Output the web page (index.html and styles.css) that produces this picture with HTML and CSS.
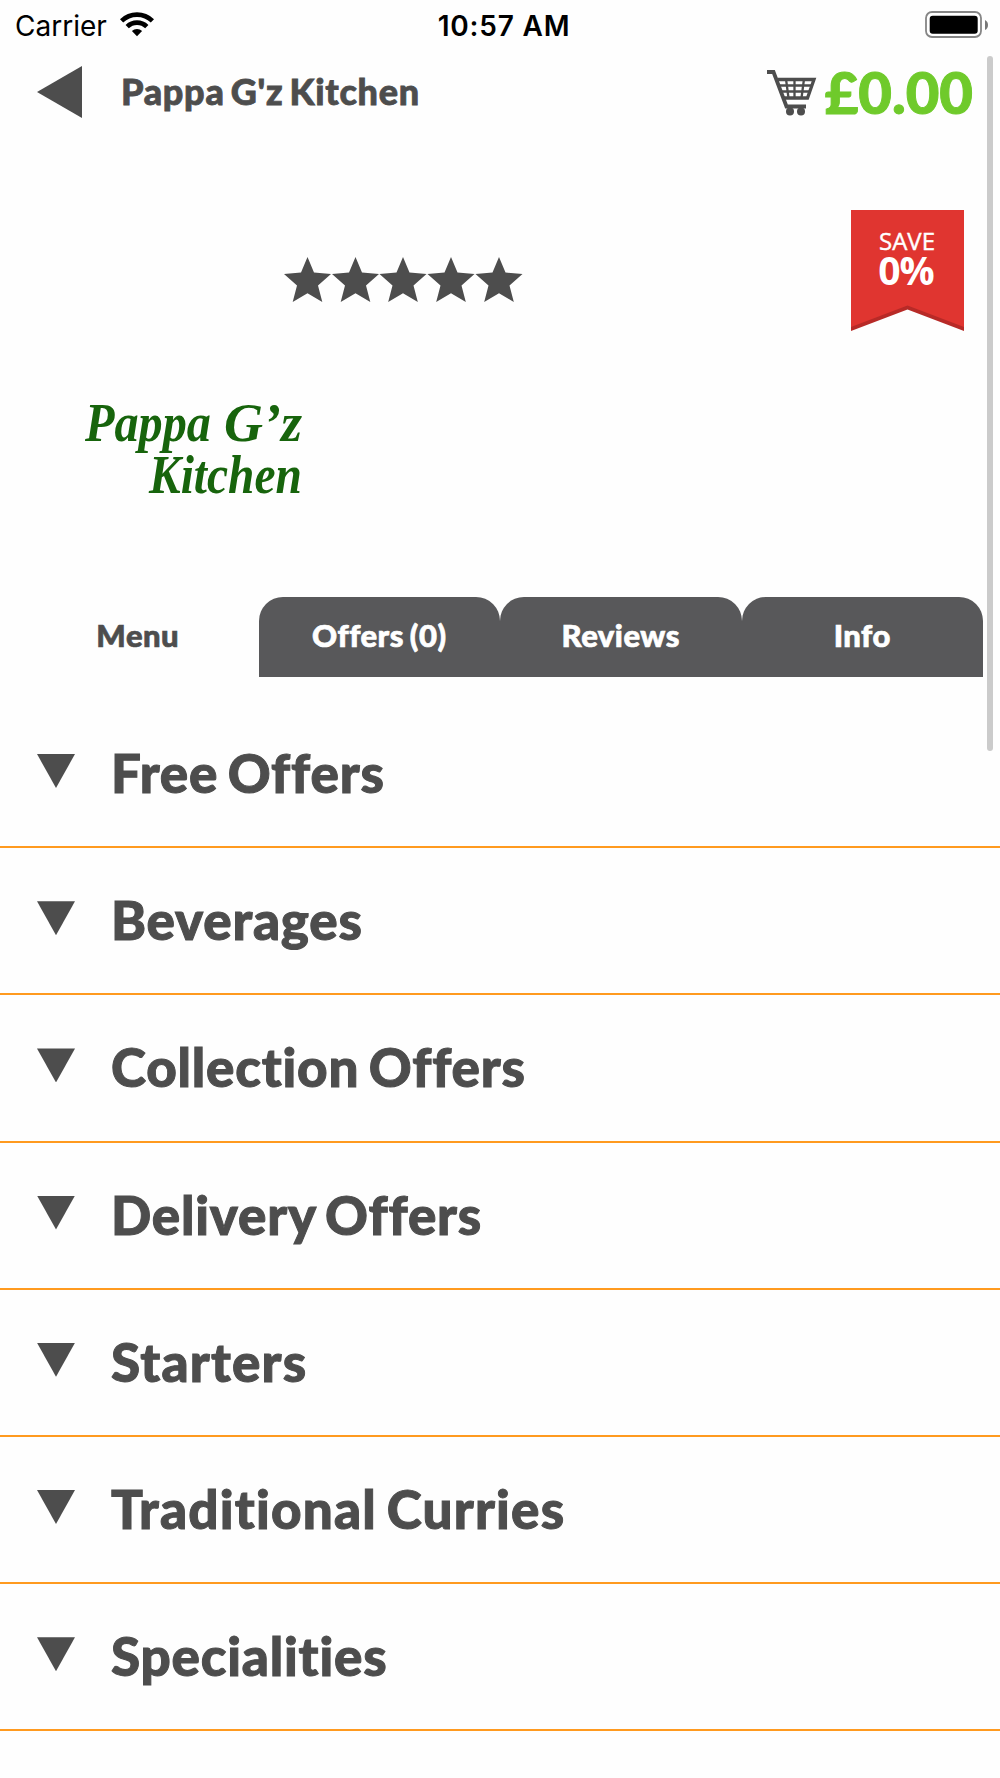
FILE: index.html
```html
<!DOCTYPE html>
<html lang="en">
<head>
<meta charset="utf-8">
<title>Pappa G'z Kitchen</title>
<link rel="stylesheet" href="styles.css">
</head>
<body>
<div class="screen">
  <div class="status">
    <div class="carrier"><span>Carrier</span>
      <svg width="34" height="25" viewBox="0 0 34 25"><g fill="none" stroke="#000" stroke-width="4.6"><path d="M1.6 8.9A22 22 0 0 1 32.4 8.9"/><path d="M7.2 14.6A14 14 0 0 1 26.8 14.6"/></g><path d="M17 24.2L11.9 19.1A7.2 7.2 0 0 1 22.1 19.1Z"/></svg>
    </div>
    <div class="time">10:57 AM</div>
    <svg class="battery" width="64" height="28" viewBox="0 0 64 28"><rect x="1" y="1" width="55" height="25" rx="6" fill="#fff" stroke="#858585" stroke-width="1.8"/><rect x="4.7" y="4.8" width="48" height="18" rx="3" /><path d="M60 9Q63 10.500 63 14T60 19Z" fill="#777"/></svg>
  </div>
  <header class="header">
    <svg width="45" height="52" viewBox="0 0 45 52"><path d="M0 26L45 0V52Z" fill="#4d4d4d"/></svg>
    <h1 class="title">Pappa G'z Kitchen</h1>
    <svg class="cart" width="50" height="46" viewBox="0 0 50 46"><g fill="none" stroke="#4d4d4d"><path d="M0 2H6.500L19.500 36.500H39" stroke-width="3.800"/><path d="M10.500 9.500H47L40.500 28H17" stroke-width="3.300"/><path d="M12 15.500H45M14 21.500H43M19 9L21.500 28M27.500 9V28M37 9L34.500 28" stroke-width="2.300"/></g><circle cx="23" cy="41.500" r="4" fill="#4d4d4d"/><circle cx="34" cy="41.500" r="4" fill="#4d4d4d"/></svg>
    <div class="price">£0.00</div>
  </header>
  <section class="hero">
    <svg class="stars" width="240" height="46" viewBox="0 0 240 46"><defs><path id="star" d="M23.500 0L30 15.500L47 17L34 28.500L38.300 45L23.500 36.300L8.700 45L13 28.500L0 17L17 15.500Z"/></defs><g fill="#4d4d4d"><use href="#star"/><use href="#star" x="48"/><use href="#star" x="95.500"/><use href="#star" x="143.500"/><use href="#star" x="191.500"/></g></svg>
    <div class="ribbon">
      <svg class="flag" width="113" height="121" viewBox="0 0 113 121"><path d="M0 0H113V121L56.500 99.500L0 121Z" fill="#b72a27"/><path d="M0 0H113V117L56.500 95.500L0 117Z" fill="#e03530"/></svg>
      <div class="save">SAVE</div>
      <div class="percent">0%</div>
    </div>
  </section>
  <svg class="logo" width="240" height="130" viewBox="0 -10 240 130"><g class="script"><text x="3" y="46" textLength="126" lengthAdjust="spacingAndGlyphs">Pappa</text><text x="142" y="46" textLength="78" lengthAdjust="spacingAndGlyphs">G’z</text><text x="67" y="98" textLength="153" lengthAdjust="spacingAndGlyphs">Kitchen</text></g></svg>
  <nav class="tabs">
    <div class="tab active">Menu</div><div class="tab">Offers (0)</div><div class="tab">Reviews</div><div class="tab">Info</div>
  </nav>
  <ul class="menu">
    <li class="row"><i class="arrow"></i><span>Free Offers</span></li>
    <li class="row"><i class="arrow"></i><span>Beverages</span></li>
    <li class="row"><i class="arrow"></i><span>Collection Offers</span></li>
    <li class="row"><i class="arrow"></i><span>Delivery Offers</span></li>
    <li class="row loose"><i class="arrow"></i><span>Starters</span></li>
    <li class="row loose"><i class="arrow"></i><span>Traditional Curries</span></li>
    <li class="row"><i class="arrow"></i><span>Specialities</span></li>
  </ul>
  <div class="scrollbar"></div>
</div>
</body>
</html>
```
FILE: styles.css
```css
* { box-sizing: border-box; }
body { margin: 0; background: #fefefe; color: #4d4d4d; font-family: Lato, sans-serif; font-variant-ligatures: none; }
svg { display: block; flex: none; }
.screen { position: relative; width: 1000px; height: 1778px; overflow: hidden; }
.status { height: 50px; display: grid; grid-template-columns: 400px 1fr 400px; color: #000; font-family: Inter, sans-serif; font-size: 28px; line-height: 52px; }
.carrier { display: flex; gap: 13px; padding-left: 15px; }
.carrier svg { margin-top: 12px; }
.time { text-align: center; font-weight: 600; letter-spacing: 0.8px; padding-left: 8px; white-space: nowrap; }
.battery { justify-self: end; margin: 11px 11px 0 0; }
.header { height: 84px; display: flex; align-items: center; padding: 0 27px 0 37px; }
.title { flex: 1; margin: -3px 0 0 39px; font-size: 36px; font-weight: 900; line-height: 50px; letter-spacing: 0.7px; word-spacing: -3px; -webkit-text-stroke: 0.8px; }
.cart { margin-right: 8px; margin-top: 2px; }
.price { font-size: 58px; font-weight: 900; line-height: 70px; color: #6fca2b; -webkit-text-stroke: 1px; }
.hero { height: 248px; display: flex; justify-content: space-between; padding: 76px 36px 0 284px; }
.stars { margin-top: 47px; }
.ribbon { display: grid; width: 113px; height: 121px; color: #fff; font-family: "Open Sans", sans-serif; text-align: center; grid-template-rows: 46px 32px 1fr; }
.flag { grid-area: 1 / 1 / 4 / 2; }
.save { grid-area: 1 / 1; font-size: 24px; font-weight: 500; line-height: 30px; padding: 16px 1px 0 0; -webkit-text-stroke: 0.4px; }
.percent { grid-area: 2 / 1; font-size: 39px; font-weight: 700; line-height: 28px; letter-spacing: -1px; padding-right: 3px; }
.logo { margin: 3px 0 0 82px; }
.script { font: italic 700 54px "Liberation Serif", serif; fill: #17640c; }
.tabs { display: flex; height: 80px; margin: 82px 17px 0; }
.tab { flex: 1; border-radius: 24px 24px 0 0; background: #58585a; color: #fff; font-size: 31px; font-weight: 900; line-height: 77px; text-align: center; letter-spacing: 0.5px; word-spacing: -2px; -webkit-text-stroke: 0.7px; }
.active { background: none; color: #4d4d4d; }
.menu { list-style: none; margin: 24px 0 0; padding: 0; }
.row { display: flex; height: 147.2px; padding: 0 37px; border-bottom: 2px solid #ff9a1f; font-size: 53px; font-weight: 900; line-height: 143px; letter-spacing: 0.8px; word-spacing: -4px; -webkit-text-stroke: 1px; }
.loose { letter-spacing: 1.2px; }
.arrow { width: 38px; height: 34px; margin: 53px 36px 0 0; background: #4d4d4d; clip-path: polygon(0 0, 100% 0, 50% 100%); }
.scrollbar { position: absolute; left: 987px; top: 56px; width: 6px; height: 695px; border-radius: 3px; background: #cbcbcb; }
```
